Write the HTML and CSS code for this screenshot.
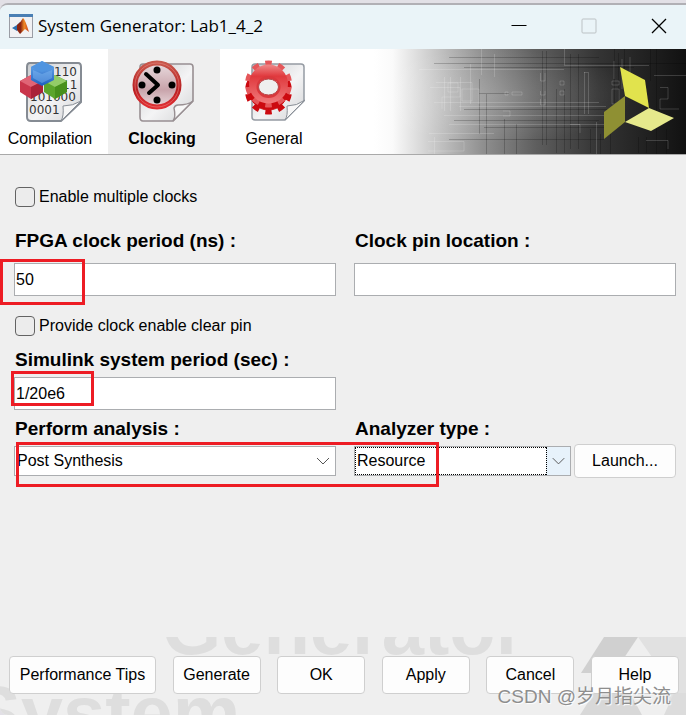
FILE: index.html
```html
<!DOCTYPE html>
<html lang="en">
<head>
    <meta charset="UTF-8">
    <meta name="viewport" content="width=device-width, initial-scale=1.0">
    <title>System Generator: Lab1_4_2</title>
    <link rel="stylesheet" href="styles.css">
</head>
<body>
    <div class="behind">图片</div>
    <div class="window">
        <header class="title-bar">
            <svg class="app-icon" width="24" height="24" viewBox="0 0 24 24">
                <defs>
                    <linearGradient id="flame" x1="0" x2="1">
                        <stop offset="0.3" stop-color="#8c2410"/>
                        <stop offset="0.6" stop-color="#f08a24"/>
                        <stop offset="1" stop-color="#c8401c"/>
                    </linearGradient>
                </defs>
                <rect x="0.5" y="0.5" width="23" height="23" fill="#f1f1f3" stroke="#9a9da5"/>
                <rect x="0" y="0" width="24" height="3" fill="#4a7fb4"/>
                <path d="M3 14 L8 11 L11 8 L12 11 L8 17 Z" fill="#2f6fae"/>
                <path d="M8 11 Q12 8 14 4 Q16 5 20 18 L16 15 L11 20 L8 16 Z" fill="url(#flame)"/>
            </svg>
            <h1>System Generator: Lab1_4_2</h1>
            <div class="window-buttons">
                <button type="button" aria-label="Minimize">
                    <svg width="16" height="16" viewBox="0 0 16 16"><path d="M0.5 7.5H15.5" stroke="#000"/></svg>
                </button>
                <button type="button" aria-label="Maximize" disabled>
                    <svg width="16" height="16" viewBox="0 0 16 16"><rect x="1" y="1" width="14" height="14" rx="1" fill="none" stroke="#bcc2c5"/></svg>
                </button>
                <button type="button" aria-label="Close">
                    <svg width="16" height="16" viewBox="0 0 16 16"><path d="M1 1L15 15M15 1L1 15" stroke="#000" stroke-width="1.3"/></svg>
                </button>
            </div>
        </header>

        <nav class="toolbar">
            <div class="tabs">
                <button type="button" class="tab">
                    <svg width="64" height="64" viewBox="0 0 64 64">
                        <defs>
                            <linearGradient id="page" x1="0" y1="0" x2="1" y2="1">
                                <stop offset="0" stop-color="#c9cbce"/>
                                <stop offset="0.55" stop-color="#f4f4f5"/>
                                <stop offset="1" stop-color="#d3d4d6"/>
                            </linearGradient>
                            <linearGradient id="blue" x1="0" y1="0" x2="0" y2="1">
                                <stop offset="0" stop-color="#6fb0f0"/>
                                <stop offset="1" stop-color="#1d5fc0"/>
                            </linearGradient>
                        </defs>
                        <path d="M12 4H60Q63 4 63 8V43L43 62H13Q9 62 9 58V8Q9 4 12 4Z" fill="url(#page)" stroke="#858b93" stroke-width="2"/>
                        <g class="bits">
                            <text x="13" y="17">0</text>
                            <text x="36" y="17">110</text>
                            <text x="44" y="30">11</text>
                            <text x="12" y="42">101000</text>
                            <text x="11" y="55">0001</text>
                        </g>
                        <path d="M43 62Q46 57 45 47Q55 47 63 42Z" fill="#f7f7f7" stroke="#888e96"/>
                        <path d="M13 16L25 22V33L13 40L2 33V22Z" fill="#c9354b"/>
                        <path d="M13 16L25 22L13 28L2 22Z" fill="#e06476"/>
                        <path d="M13 28L25 22V33L13 40Z" fill="#a92238"/>
                        <path d="M37 16L49 22V33L37 40L26 33V22Z" fill="#5ba52c"/>
                        <path d="M37 16L49 22L37 28L26 22Z" fill="#93cc68"/>
                        <path d="M37 28L49 22V33L37 40Z" fill="#47901c"/>
                        <path d="M24 2L36 8V21L24 27L13 21V8Z" fill="url(#blue)"/>
                        <path d="M24 2L36 8L24 13L13 8Z" fill="#4f94e0"/>
                        <path d="M15 11L24 15L34 11V19L24 24L15 19Z" fill="#8cc0f4" opacity="0.4"/>
                    </svg>
                    <span>Compilation</span>
                </button>
                <button type="button" class="tab active">
                    <svg width="64" height="64" viewBox="0 0 64 64">
                        <defs>
                            <linearGradient id="face" x1="0" y1="0" x2="0" y2="1">
                                <stop offset="0" stop-color="#e9dcdf"/>
                                <stop offset="0.6" stop-color="#c8a3aa"/>
                                <stop offset="1" stop-color="#eadadd"/>
                            </linearGradient>
                            <linearGradient id="ring" x1="0" y1="0" x2="0" y2="1">
                                <stop offset="0" stop-color="#c8584c"/>
                                <stop offset="0.6" stop-color="#b81f22"/>
                                <stop offset="1" stop-color="#e03034"/>
                            </linearGradient>
                        </defs>
                        <path d="M13 5H60Q63 5 63 8V42L43 62H13Q10 62 10 58V8Q10 5 13 5Z" fill="url(#page)" stroke="#988f92" stroke-width="1.6"/>
                        <path d="M43 62Q46 58 44 49Q45 46 48 46Q58 46 63 42Z" fill="#f7f7f7" stroke="#988f92" stroke-width="1.4"/>
                        <circle cx="27" cy="26" r="22" fill="url(#face)" stroke="url(#ring)" stroke-width="5"/>
                        <circle cx="27" cy="26" r="22" fill="none" stroke="#ee8f8c" stroke-width="1" opacity="0.5"/>
                        <circle cx="27" cy="11" r="3.5"/>
                        <circle cx="12" cy="26" r="3.5"/>
                        <circle cx="42" cy="26" r="3.5"/>
                        <circle cx="27" cy="41" r="3.5"/>
                        <path d="M16 15L28 26L19 34" fill="none" stroke="#000" stroke-width="4" stroke-linecap="round" stroke-linejoin="round"/>
                    </svg>
                    <span>Clocking</span>
                </button>
                <button type="button" class="tab">
                    <svg width="64" height="64" viewBox="0 0 64 64">
                        <defs>
                            <linearGradient id="gear" x1="0" y1="0" x2="0" y2="1">
                                <stop offset="0" stop-color="#f08a8a"/>
                                <stop offset="0.3" stop-color="#e0393d"/>
                                <stop offset="1" stop-color="#f07a7c"/>
                            </linearGradient>
                        </defs>
                        <path d="M13 5H59Q62 5 62 8V42L43 61H13Q10 61 10 58V8Q10 5 13 5Z" fill="url(#page)" stroke="#959ba3" stroke-width="1.5"/>
                        <path d="M43 61Q46 57 45 47Q55 47 63 41Z" fill="#f7f7f7" stroke="#8a9098"/>
                        <!-- side of the gear, seen below its face -->
                        <g fill="#cc0a10" stroke="#cc0a10">
                            <circle cx="26.5" cy="32" r="19"/>
                            <circle cx="26.5" cy="32" r="21" fill="none" stroke-width="5" pathLength="100" stroke-dasharray="5 5" stroke-dashoffset="-2.5" transform="rotate(0 26.5 32)"/>
                        </g>
                        <g fill="none" stroke="#e5575a">
                            <circle cx="26.5" cy="25" r="21" stroke-width="5" pathLength="100" stroke-dasharray="5 5" stroke-dashoffset="-2.5"/>
                            <circle cx="26.5" cy="25" r="19.5" fill="url(#gear)" stroke="none"/>
                        </g>
                        <ellipse cx="26.5" cy="28" rx="12" ry="11" fill="#d9383c"/>
                        <ellipse cx="26.5" cy="28" rx="10" ry="8" fill="#efefef" stroke="#b8484a"/>
                    </svg>
                    <span>General</span>
                </button>
            </div>
            <svg class="banner" width="312" height="105" viewBox="0 0 312 105">
                <defs>
                    <linearGradient id="fade" x1="0" x2="1">
                        <stop offset="0" stop-color="#fff"/>
                        <stop offset="0.06" stop-color="#fafafa"/>
                        <stop offset="0.2" stop-color="#c6c6c6"/>
                        <stop offset="0.35" stop-color="#8f8f8f"/>
                        <stop offset="0.52" stop-color="#5e5e5e"/>
                        <stop offset="0.72" stop-color="#343434"/>
                        <stop offset="1" stop-color="#111"/>
                    </linearGradient>
                    <radialGradient id="glow" cx="0.38" cy="0.45" r="0.45">
                        <stop offset="0" stop-color="#fff" stop-opacity="0.18"/>
                        <stop offset="1" stop-color="#fff" stop-opacity="0"/>
                    </radialGradient>
                </defs>
                <rect width="312" height="105" fill="url(#fade)"/>
                <rect width="312" height="105" fill="url(#glow)"/>
                <g fill="none" stroke="#000" stroke-opacity="0.2">
                    <path d="M75 8.5H225M60 14.5H312M90 18.5H260M105 44.5H135M168.5 2V96M172.5 2V96M182.5 40V104M190.5 40V104M196.5 5V100M204.5 5V100M240.5 0V70M244.5 4V60M250.5 0V50M276.5 0V32M282.5 0V105M292.5 80V105"/>
                    <path d="M90 60.5H245M80 71.5H225M110 78.5H240M75 90.5H230M226.5 85V105M236.5 78V105M216.5 80V104M264.5 88V104M272.5 88V104M105.5 30V85M112.5 45V105M130.5 70V105M142.5 75V105"/>
                </g>
                <g fill="none" stroke="#fff" stroke-opacity="0.17">
                    <path d="M45 20.5H190M60 53.5H225M85 57.5H232M70 66.5H230M75 75.5H240M55 84.5H120M190 16.5H275M190.5 0V16M107.5 0V26M120.5 5V28M210.5 23V65M214.5 23V65M210 23.5H214M96.5 15V55M222.5 73V105"/>
                    <path d="M62 33.5H98V40H105V55M56 38.5H86V48H68V60M70.5 28V62M76.5 28V62M86.5 28V62M74 34H84V43H74ZM88 40H98V52H88ZM54 92.5H90V102H54M60.5 88V105"/>
                    <path d="M166.5 24V32H171V24M166.5 42V46H171V42M166.5 50V56H171V50M186 32H190V36H186ZM186 42H190V46H186ZM131 43H134V46H131ZM138 43H148V46H138ZM129 62H136V67H129"/>
                    <path d="M238 32H245V36H238ZM238 40H245V55H238ZM238 60H245V66H238ZM280 26.5H312M256 8V45H270M286 38.5H294V50H286V60H305M196 75.5H206V84M272 91.5H294V100M240 12V30M248 10V40"/>
                </g>
                <path d="M230 63L251 47V73L230 90Z" fill="#8f9033"/>
                <path d="M246 18L271 31L275 59L251 47Z" fill="#e1e34d"/>
                <path d="M275 59L300 69L277 82L251 73Z" fill="#e6e98c"/>
            </svg>
        </nav>

        <main class="panel">
            <label class="check">
                <input type="checkbox">
                Enable multiple clocks
            </label>
            <div class="row clock-row">
                <div class="field marked">
                    <label for="clockPeriod">FPGA clock period (ns) :</label>
                    <input type="text" id="clockPeriod" value="50">
                    <span class="mark mark-clock"></span>
                </div>
                <div class="field">
                    <label for="pinLocation">Clock pin location :</label>
                    <input type="text" id="pinLocation">
                </div>
            </div>
            <label class="check">
                <input type="checkbox">
                Provide clock enable clear pin
            </label>
            <div class="row period-row">
                <div class="field marked">
                    <label for="systemPeriod">Simulink system period (sec) :</label>
                    <input type="text" id="systemPeriod" value="1/20e6">
                    <span class="mark mark-period"></span>
                </div>
            </div>
            <div class="row analysis-row marked">
                <div class="field">
                    <label for="analysis">Perform analysis :</label>
                    <div class="select-line">
                        <div class="select-box">
                            <select id="analysis">
                                <option>Post Synthesis</option>
                            </select>
                            <svg class="chevron" width="24" height="28" viewBox="0 0 24 28"><path d="M6 11L12 17L18 11" fill="none" stroke="#555"/></svg>
                        </div>
                    </div>
                </div>
                <div class="field">
                    <label for="analyzer">Analyzer type :</label>
                    <div class="select-line">
                        <div class="select-box focused">
                            <select id="analyzer">
                                <option>Resource</option>
                            </select>
                            <svg class="chevron" width="24" height="28" viewBox="0 0 24 28"><path d="M6 11L12 17L18 11" fill="none" stroke="#555"/></svg>
                        </div>
                        <button type="button" class="button launch">Launch...</button>
                    </div>
                </div>
                <span class="mark mark-analysis"></span>
            </div>
        </main>

        <footer class="footer">
            <div class="backdrop">
                <span class="word word-generator">Generator</span>
                <span class="word word-system">System</span>
                <svg class="backdrop-logo" width="110" height="78" viewBox="0 0 110 78">
                    <path d="M28 0H62L38 36H5Z" fill="#d0d0d0"/>
                    <path d="M62 0H110V78H98L76 20Z" fill="#e1e1e1"/>
                    <path d="M4 78L18 56H54L66 78Z" fill="#d8d8d8"/>
                    <path d="M98 56H110V78H88Z" fill="#dcdcdc"/>
                </svg>
            </div>
            <div class="actions">
                <button type="button" class="button tips">Performance Tips</button>
                <button type="button" class="button">Generate</button>
                <button type="button" class="button">OK</button>
                <button type="button" class="button">Apply</button>
                <button type="button" class="button">Cancel</button>
                <button type="button" class="button">Help</button>
            </div>
            <div class="credit">CSDN @岁月指尖流</div>
        </footer>
    </div>
</body>
</html>
```
FILE: styles.css
```css
* {
    box-sizing: border-box;
    margin: 0;
    padding: 0;
}
body {
    font-family: "Liberation Sans", "Noto Sans CJK SC", sans-serif;
    font-size: 16px;
    line-height: 20px;
    color: #000;
    background-color: #e2e0e6;
    height: 100vh;
    display: flex;
    flex-direction: column;
    overflow: hidden;
}
button, input, select {
    font: inherit;
    color: inherit;
}
.behind {
    height: 3px;
    padding-left: 59px;
    display: flex;
    align-items: flex-end;
    overflow: hidden;
    color: #888;
}
.window {
    flex: 1;
    display: flex;
    flex-direction: column;
    background-color: #efefef;
    border-top: 2px solid #b1b0b5;
    border-radius: 8px 0 0 8px;
    overflow: hidden;
}

/* title bar */
.title-bar {
    height: 44px;
    display: flex;
    align-items: center;
    padding: 0 18px 2px 9px;
    background-color: #eaf4f8;
}
.title-bar h1 {
    flex: 1;
    margin-left: 5px;
    font-family: "Open Sans", "Noto Sans", sans-serif;
    font-size: 17px;
    font-weight: normal;
}
.window-buttons {
    display: flex;
    gap: 52px;
}
.window-buttons button {
    width: 18px;
    height: 18px;
    border: none;
    background: none;
    display: flex;
    align-items: center;
    justify-content: center;
}

/* tabs and banner */
.toolbar {
    display: flex;
    justify-content: space-between;
    height: 106px;
    background-color: #fff;
    border-bottom: 1px solid #a9a9a9;
}
.tabs {
    display: flex;
    margin-left: -4px;
}
.tab {
    width: 112px;
    padding: 10px 4px 5px 0;
    border: none;
    background: none;
    display: flex;
    flex-direction: column;
    align-items: center;
    gap: 6px;
    cursor: pointer;
}
.tab.active {
    background-color: #efefef;
    font-weight: bold;
}
.tab svg {
    flex-shrink: 0;
}
.bits {
    font-family: "DejaVu Sans", sans-serif;
    font-size: 12px;
    fill: #333;
}

/* settings */
.panel {
    flex: 1;
    padding: 31px 10px 0 14px;
}
.check {
    display: flex;
    align-items: center;
    gap: 4px;
    height: 22px;
    margin-left: 1px;
}
.check input {
    appearance: none;
    width: 20px;
    height: 20px;
    border: 1px solid #636363;
    border-radius: 4px;
    background-color: #ececec;
}
.row {
    display: grid;
    grid-template-columns: 1fr 1fr;
    column-gap: 18px;
}
.clock-row {
    margin: 21px 0 19px;
}
.period-row {
    margin: 11px 0 7px;
}
.field {
    display: flex;
    flex-direction: column;
}
.field label {
    font-size: 19px;
    font-weight: bold;
    line-height: 24px;
    margin-left: 1px;
}
.field input {
    width: 100%;
    height: 33px;
    padding: 0 1px;
    border: 1px solid #abadb0;
    background-color: #fff;
    outline: none;
}
.clock-row .field {
    gap: 10px;
}
.period-row .field {
    gap: 5px;
}
.analysis-row .field {
    gap: 3px;
}
.select-line {
    display: flex;
    align-items: center;
    gap: 3px;
    height: 34px;
}
.select-box {
    flex: 1;
    position: relative;
    height: 30px;
    border: 1px solid #abadb0;
    background-color: #fff;
}
.select-box select {
    appearance: none;
    width: 100%;
    height: 28px;
    padding: 0 26px 0 2px;
    border: none;
    background: none;
    outline: none;
}
.chevron {
    position: absolute;
    top: 0;
    right: 0;
    pointer-events: none;
}
.focused .chevron {
    background-color: #e7f2fb;
    border-left: 1px dotted #000;
}
.focused select {
    border-top: 1px dotted #000;
    border-bottom: 1px dotted #000;
    border-left: 1px dotted #000;
    padding-left: 1px;
}

/* red annotation frames */
.marked {
    position: relative;
}
.mark {
    position: absolute;
    border: 3px solid #ed1c24;
    pointer-events: none;
}
.mark-clock {
    left: -14px;
    top: 30px;
    width: 85px;
    height: 46px;
}
.mark-period {
    left: -3px;
    top: 23px;
    width: 83px;
    height: 35px;
}
.mark-analysis {
    left: 2px;
    top: 25px;
    width: 423px;
    height: 45px;
}

/* buttons */
.button {
    width: 88px;
    height: 38px;
    border: 1px solid #cfcfcf;
    border-radius: 4px;
    background-color: #fdfdfd;
    cursor: pointer;
}
.launch {
    width: 102px;
    height: 34px;
}
.tips {
    width: 147px;
}
.footer {
    position: relative;
    height: 78px;
    padding: 19px 7px 0 9px;
}
.actions {
    position: relative;
    display: flex;
    justify-content: space-between;
}
.backdrop {
    position: absolute;
    inset: 0;
    overflow: hidden;
}
.word {
    position: absolute;
    font-size: 76px;
    font-weight: bold;
    line-height: 76px;
    color: #dedede;
}
.word-generator {
    left: 162px;
    top: -47px;
}
.word-system {
    left: -30px;
    top: 38px;
}
.backdrop-logo {
    position: absolute;
    right: 0;
    top: 0;
}
.credit {
    position: absolute;
    right: 15px;
    bottom: 5px;
    font-size: 19px;
    line-height: 26px;
    color: #8e8e8e;
    text-shadow: 1px 1px 1px #fff;
}
```
